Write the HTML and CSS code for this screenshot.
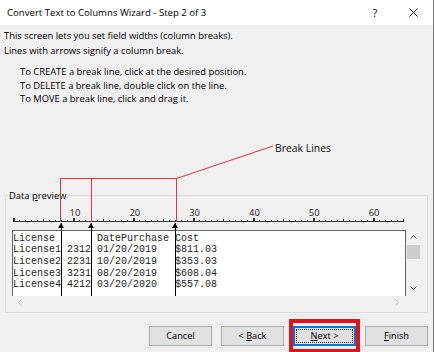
FILE: index.html
```html
<!DOCTYPE html>
<html lang="en">
<head>
    <meta charset="UTF-8">
    <meta name="viewport" content="width=device-width, initial-scale=1.0">
    <title>Convert Text to Columns Wizard</title>
    <link rel="stylesheet" href="styles.css">
</head>
<body>
    <div class="window">
        <div class="titlebar">
            <span class="title">Convert Text to Columns Wizard - Step 2 of 3</span>
            <span class="help">?</span>
            <span class="close">
                <svg width="9" height="9" viewBox="0 0 9 9"><path d="M0.5 0.5 L8.5 8.5 M8.5 0.5 L0.5 8.5" stroke="#1a1a1a" stroke-width="1"/></svg>
            </span>
        </div>

        <p class="intro">This screen lets you set field widths (column breaks).<br>Lines with arrows signify a column break.</p>
        <p class="howto">To CREATE a break line, click at the desired position.<br>To DELETE a break line, double click on the line.<br>To MOVE a break line, click and drag it.</p>

        <!-- annotation drawn over the screenshot -->
        <div class="callout">
            <svg width="280" height="84" viewBox="0 0 280 84">
                <g stroke="#e3344c" stroke-width="1" fill="none">
                    <path d="M60.5 38.5 V82 M91.5 38.5 V82 M176.5 38.5 V82"/>
                    <path d="M60 38.5 H176.5 L273 6"/>
                </g>
            </svg>
            <span class="callout-label">Break Lines</span>
        </div>

        <fieldset class="preview-group">
            <legend>Data <u>p</u>review</legend>
            <div class="ruler">
                <div class="ruler-nums">
                    <span>10</span><span>20</span><span>30</span><span>40</span><span>50</span><span>60</span>
                </div>
                <div class="ruler-ticks"></div>
            </div>
            <div class="preview">
                <div class="preview-text">
<pre>License       DatePurchase Cost
License1 2312 01/20/2019   $811.03
License2 2231 10/20/2019   $353.03
License3 3231 08/20/2019   $608.04
License4 4212 03/20/2020   $557.08</pre>
                    <div class="brk" style="--col: 8"></div>
                    <div class="brk" style="--col: 13"></div>
                    <div class="brk" style="--col: 27"></div>
                </div>
                <div class="vscroll">
                    <svg width="7" height="4" viewBox="0 0 7 4"><path d="M0.5 3.5 L3.5 0.5 L6.5 3.5" stroke="#606060" fill="none"/></svg>
                    <div class="thumb"></div>
                    <svg class="down" width="7" height="4" viewBox="0 0 7 4"><path d="M0.5 0.5 L3.5 3.5 L6.5 0.5" stroke="#606060" fill="none"/></svg>
                </div>
                <div class="hscroll">
                    <svg width="4" height="7" viewBox="0 0 4 7"><path d="M3.5 0.5 L0.5 3.5 L3.5 6.5" stroke="#c4c4c4" fill="none"/></svg>
                    <svg width="4" height="7" viewBox="0 0 4 7"><path d="M0.5 0.5 L3.5 3.5 L0.5 6.5" stroke="#c4c4c4" fill="none"/></svg>
                </div>
            </div>
        </fieldset>

        <div class="buttons">
            <button>Cancel</button>
            <button>&lt; <u>B</u>ack</button>
            <button class="btn-next"><u>N</u>ext &gt;</button>
            <button><u>F</u>inish</button>
        </div>
    </div>
</body>
</html>
```

FILE: styles.css
```css
* {
    margin: 0;
    padding: 0;
    box-sizing: border-box;
}
body {
    background: #fff;
    font-family: "Open Sans", sans-serif;
    color: #000;
}
.window {
    position: relative;
    width: 434px;
    height: 352px;
    background: #f0f0f0;
    border-right: 1px solid #7a7a7a;
    overflow: hidden;
    font-size: 9.4px;
}
.titlebar {
    display: flex;
    align-items: center;
    height: 25px;
    background: #fff;
    padding: 0 15px 0 7px;
    font-size: 9.6px;
}
.title {
    flex: 1;
}
.help {
    width: 12px;
    text-align: center;
    font-size: 10.5px;
}
.close {
    display: flex;
    margin-left: 28px;
}
.intro {
    margin-top: 3px;
    padding-left: 4px;
    line-height: 15px;
}
.howto {
    margin-top: 7px;
    padding-left: 20px;
    line-height: 13.5px;
}
.callout {
    position: absolute;
    left: 0;
    top: 140px;
    width: 340px;
    height: 84px;
}
.callout svg {
    display: block;
}
.callout-label {
    position: absolute;
    left: 275px;
    top: 1px;
    font-size: 10.4px;
    line-height: 14px;
    color: #111;
}
.preview-group {
    margin: 84px 5px 0 5px;
    width: 423px;
    border: 1px solid #dcdcdc;
    padding: 0 0 2px 0;
}
.preview-group legend {
    margin-left: 2px;
    padding: 0 1px;
    line-height: 12px;
}
.ruler {
    margin: 6px 0 0 7px;
    width: 391px;
}
.ruler-nums {
    display: flex;
    padding-left: 32px;
    height: 10px;
    line-height: 10px;
    color: #222;
}
.ruler-nums span {
    width: 60px;
    text-align: center;
}
.ruler-ticks {
    height: 4px;
    background:
        linear-gradient(#333, #333) left bottom / 100% 1px no-repeat,
        repeating-linear-gradient(90deg, #333 0 2px, transparent 2px 60px) left bottom / 100% 4px no-repeat,
        repeating-linear-gradient(90deg, #333 0 1px, transparent 1px 30px) left bottom / 100% 3px no-repeat,
        repeating-linear-gradient(90deg, #444 0 1px, transparent 1px 6px) left bottom / 100% 2px no-repeat;
}
.preview {
    margin: 8px 0 0 6px;
    display: grid;
    grid-template-columns: 394px 15px;
    grid-template-rows: 66px 14px;
}
.preview-text {
    position: relative;
    background: #fff;
    border: 1px solid #646464;
    border-bottom: none;
    padding-top: 2px;
}
.preview-text pre {
    font-family: "Liberation Mono", monospace;
    font-size: 10px;
    line-height: 11.7px;
    color: #1e1e1e;
}
.brk {
    position: absolute;
    top: -8px;
    bottom: 0;
    left: calc(var(--col) * 6px);
    width: 1px;
    background: #000;
}
.brk::before {
    content: "";
    position: absolute;
    top: 0;
    left: -3px;
    border-left: 3.5px solid transparent;
    border-right: 3.5px solid transparent;
    border-bottom: 5px solid #000;
}
.vscroll {
    display: flex;
    flex-direction: column;
    align-items: center;
    padding: 5px 0 6px;
}
.vscroll svg {
    display: block;
}
.vscroll .thumb {
    margin-top: 6px;
    width: 13px;
    height: 14px;
    background: #cdcdcd;
}
.vscroll .down {
    margin-top: auto;
}
.hscroll {
    display: flex;
    justify-content: space-between;
    align-items: center;
    padding: 0 7px 0 6px;
}
.buttons {
    display: flex;
    justify-content: flex-end;
    gap: 9px;
    margin-top: 13px;
    padding-right: 5px;
}
button {
    width: 63px;
    height: 20px;
    font-family: "Open Sans", sans-serif;
    font-size: 9.2px;
    color: #000;
    background: #e1e1e1;
    border: 1px solid #adadad;
}
.btn-next {
    position: relative;
    border-color: #0078d7;
    box-shadow: inset 0 0 0 1px #0078d7;
    outline: 1px dotted #333;
    outline-offset: -4px;
}
.btn-next::after {
    content: "";
    position: absolute;
    top: -8px;
    bottom: -8px;
    left: -5px;
    right: -5px;
    border: 4px solid #e5121d;
}
```
